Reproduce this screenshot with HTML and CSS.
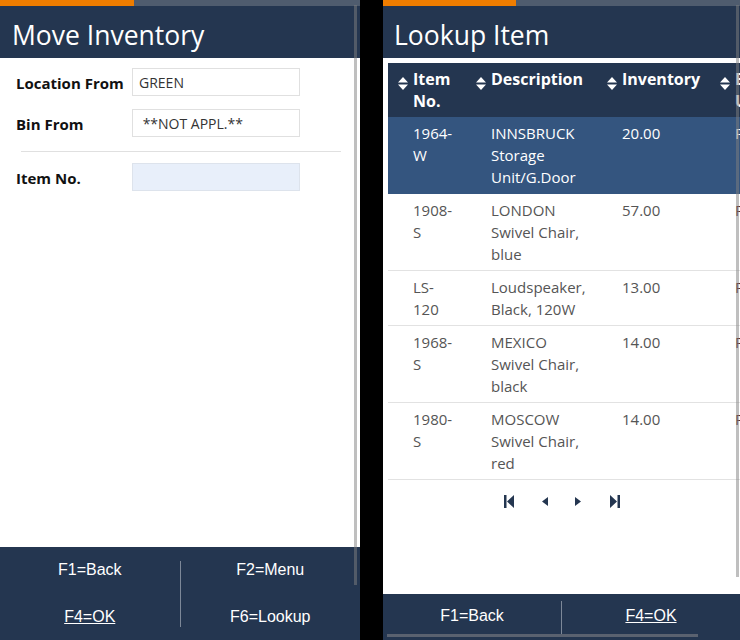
FILE: index.html
```html
<!DOCTYPE html>
<html lang="en">
<head>
  <meta charset="UTF-8" />
  <meta name="viewport" content="width=device-width, initial-scale=1.0" />
  <title>Move Inventory</title>
  <link rel="stylesheet" href="styles.css">
</head>
<body>
  <div class="screen screen-left">
    <div class="progress"><div class="progress-fill"></div></div>
    <div class="title-bar">Move Inventory</div>
    <div class="content form">
      <label class="field-label">Location From</label>
      <input class="field" type="text" value="GREEN" />
      <label class="field-label">Bin From</label>
      <input class="field" type="text" value=" **NOT APPL.**" />
      <div class="divider"></div>
      <label class="field-label">Item No.</label>
      <input class="field field-active" type="text" value="" />
    </div>
    <div class="keys keys-double">
      <div class="key-col">
        <div class="key">F1=Back</div>
        <div class="key key-default">F4=OK</div>
      </div>
      <div class="key-col key-col-right">
        <div class="key">F2=Menu</div>
        <div class="key">F6=Lookup</div>
      </div>
    </div>
    <div class="vscroll"></div>
  </div>

  <div class="screen screen-right">
    <div class="progress"><div class="progress-fill"></div></div>
    <div class="title-bar">Lookup Item</div>
    <div class="content lookup">
      <table class="grid">
        <colgroup>
          <col style="width:78px">
          <col style="width:131px">
          <col style="width:113px">
          <col style="width:120px">
        </colgroup>
        <thead>
          <tr>
            <th><span class="sort"><svg width="10" height="13" viewBox="0 0 10 13"><path d="M5 0 L10 5.5 H0 Z M0 7.5 H10 L5 13 Z" fill="#fff"/></svg></span><span>Item<br>No.</span></th>
            <th><span class="sort"><svg width="10" height="13" viewBox="0 0 10 13"><path d="M5 0 L10 5.5 H0 Z M0 7.5 H10 L5 13 Z" fill="#fff"/></svg></span><span>Description</span></th>
            <th><span class="sort"><svg width="10" height="13" viewBox="0 0 10 13"><path d="M5 0 L10 5.5 H0 Z M0 7.5 H10 L5 13 Z" fill="#fff"/></svg></span><span>Inventory</span></th>
            <th><span class="sort"><svg width="10" height="13" viewBox="0 0 10 13"><path d="M5 0 L10 5.5 H0 Z M0 7.5 H10 L5 13 Z" fill="#fff"/></svg></span><span>Base<br>Unit</span></th>
          </tr>
        </thead>
        <tbody>
          <tr class="selected">
            <td>1964-<br>W</td>
            <td>INNSBRUCK Storage Unit/G.Door</td>
            <td>20.00</td>
            <td>PCS</td>
          </tr>
          <tr>
            <td>1908-<br>S</td>
            <td>LONDON Swivel Chair, blue</td>
            <td>57.00</td>
            <td>PCS</td>
          </tr>
          <tr>
            <td>LS-<br>120</td>
            <td>Loudspeaker, Black, 120W</td>
            <td>13.00</td>
            <td>PCS</td>
          </tr>
          <tr>
            <td>1968-<br>S</td>
            <td>MEXICO Swivel Chair, black</td>
            <td>14.00</td>
            <td>PCS</td>
          </tr>
          <tr>
            <td>1980-<br>S</td>
            <td>MOSCOW Swivel Chair, red</td>
            <td>14.00</td>
            <td>PCS</td>
          </tr>
        </tbody>
      </table>
      <div class="pager">
        <svg width="10" height="13" viewBox="0 0 10 13"><path d="M0 0 H2.5 V13 H0 Z M10 0 V13 L3 6.5 Z" fill="#243650"/></svg>
        <svg width="6" height="9" viewBox="0 0 6 9"><path d="M6 0 V9 L0 4.5 Z" fill="#243650"/></svg>
        <svg width="6" height="9" viewBox="0 0 6 9"><path d="M0 0 V9 L6 4.5 Z" fill="#243650"/></svg>
        <svg width="10" height="13" viewBox="0 0 10 13"><path d="M0 0 V13 L7 6.5 Z M7.5 0 H10 V13 H7.5 Z" fill="#243650"/></svg>
      </div>
    </div>
    <div class="keys keys-single">
      <div class="key-col">
        <div class="key">F1=Back</div>
      </div>
      <div class="key-col key-col-right">
        <div class="key key-default">F4=OK</div>
      </div>
    </div>
    <div class="vscroll"></div>
    <div class="hscroll"></div>
  </div>
</body>
</html>
```

FILE: styles.css
```css
body {
  margin: 0;
  padding: 0;
  background: #000;
  font-family: "Open Sans", sans-serif;
  display: flex;
  gap: 23px;
  height: 640px;
  overflow: hidden;
}
.screen {
  position: relative;
  display: flex;
  flex-direction: column;
  height: 640px;
  background: #fff;
  overflow: hidden;
}
.screen-left {
  width: 360px;
  flex: none;
}
.screen-right {
  width: 357px;
  flex: none;
}
.progress {
  height: 6px;
  background: #4f5c6e;
}
.progress-fill {
  width: 134px;
  height: 100%;
  background: #ef7d00;
}
.screen-right .progress-fill {
  width: 133px;
}
.title-bar {
  height: 52px;
  background: #243650;
  color: #fff;
  font-size: 26.5px;
  line-height: 58px;
  padding-left: 12px;
  white-space: nowrap;
}
.screen-right .title-bar {
  padding-left: 11px;
}
.content {
  flex: 1;
}
.form {
  display: grid;
  grid-template-columns: 116px 168px;
  grid-template-rows: 28px 28px 0 28px;
  row-gap: 13px;
  align-items: center;
  padding: 10px 0 0 16px;
  align-content: start;
}
.field-label {
  font-weight: 700;
  font-size: 15px;
  color: #111;
  padding-top: 2px;
}
.field {
  box-sizing: border-box;
  width: 168px;
  height: 28px;
  margin: 0;
  border: 1px solid #e0e0e0;
  background: #fff;
  padding: 0 6px;
  font-family: "Open Sans", sans-serif;
  font-size: 14px;
  color: #333;
  outline: none;
}
.field-active {
  background: #e8effa;
  border-color: #dde3ec;
}
.divider {
  grid-column: 1 / 3;
  align-self: start;
  width: 320px;
  height: 1px;
  margin: 1px 0 0 5px;
  background: #e0e0e0;
}
.lookup {
  padding: 5px 0 0 5px;
}
.grid {
  border-collapse: collapse;
  table-layout: fixed;
  width: 442px;
  font-size: 15px;
}
.grid th {
  background: #243650;
  color: #fff;
  font-size: 16px;
  font-weight: 700;
  text-align: left;
  vertical-align: top;
  padding: 5px 0 5px 10px;
  line-height: 22px;
}
.grid th span {
  display: inline-block;
  vertical-align: top;
}
.grid th .sort {
  width: 15px;
  padding-top: 5px;
}
.grid td {
  vertical-align: top;
  padding: 5px 8px 5px 25px;
  line-height: 22px;
  color: #555;
  border-bottom: 1px solid #e2e2e2;
}
.grid tr.selected td {
  background: #34557f;
  color: #fff;
  border-bottom-color: #34557f;
}
.grid td:nth-child(4) {
  color: #5a2a2a;
}
.grid tr.selected td:nth-child(4) {
  color: #fff;
}
.pager {
  display: flex;
  align-items: center;
  padding: 15px 0 0 116px;
}
.pager svg:nth-child(1) { margin-right: 28px; }
.pager svg:nth-child(2) { margin-right: 27px; }
.pager svg:nth-child(3) { margin-right: 29px; }
.keys {
  background: #243650;
  display: flex;
  color: #fff;
  font-family: "Liberation Sans", Arial, sans-serif;
  font-size: 16px;
}
.keys-double {
  height: 93px;
  box-sizing: border-box;
  padding-top: 14px;
}
.keys-single {
  height: 46px;
  box-sizing: border-box;
  padding-top: 7px;
}
.key-col {
  flex: 1;
  display: flex;
  flex-direction: column;
  gap: 29px;
  align-items: center;
  align-self: flex-start;
}
.keys-double .key-col {
  height: 66px;
}
.keys-single .key-col {
  height: 33px;
  padding-top: 6px;
  box-sizing: border-box;
}
.key-col-right {
  border-left: 1px solid #7d8898;
}
.key {
  line-height: 18px;
  white-space: nowrap;
}
.key-default {
  text-decoration: underline;
}
.vscroll {
  position: absolute;
  top: 5px;
  width: 3px;
  background: rgba(128, 128, 128, 0.5);
}
.screen-left .vscroll {
  left: 354px;
  height: 580px;
}
.screen-right .vscroll {
  left: 353px;
  height: 572px;
}
.hscroll {
  position: absolute;
  left: 4px;
  top: 634px;
  width: 311px;
  height: 3px;
  background: #5a6270;
}
```
